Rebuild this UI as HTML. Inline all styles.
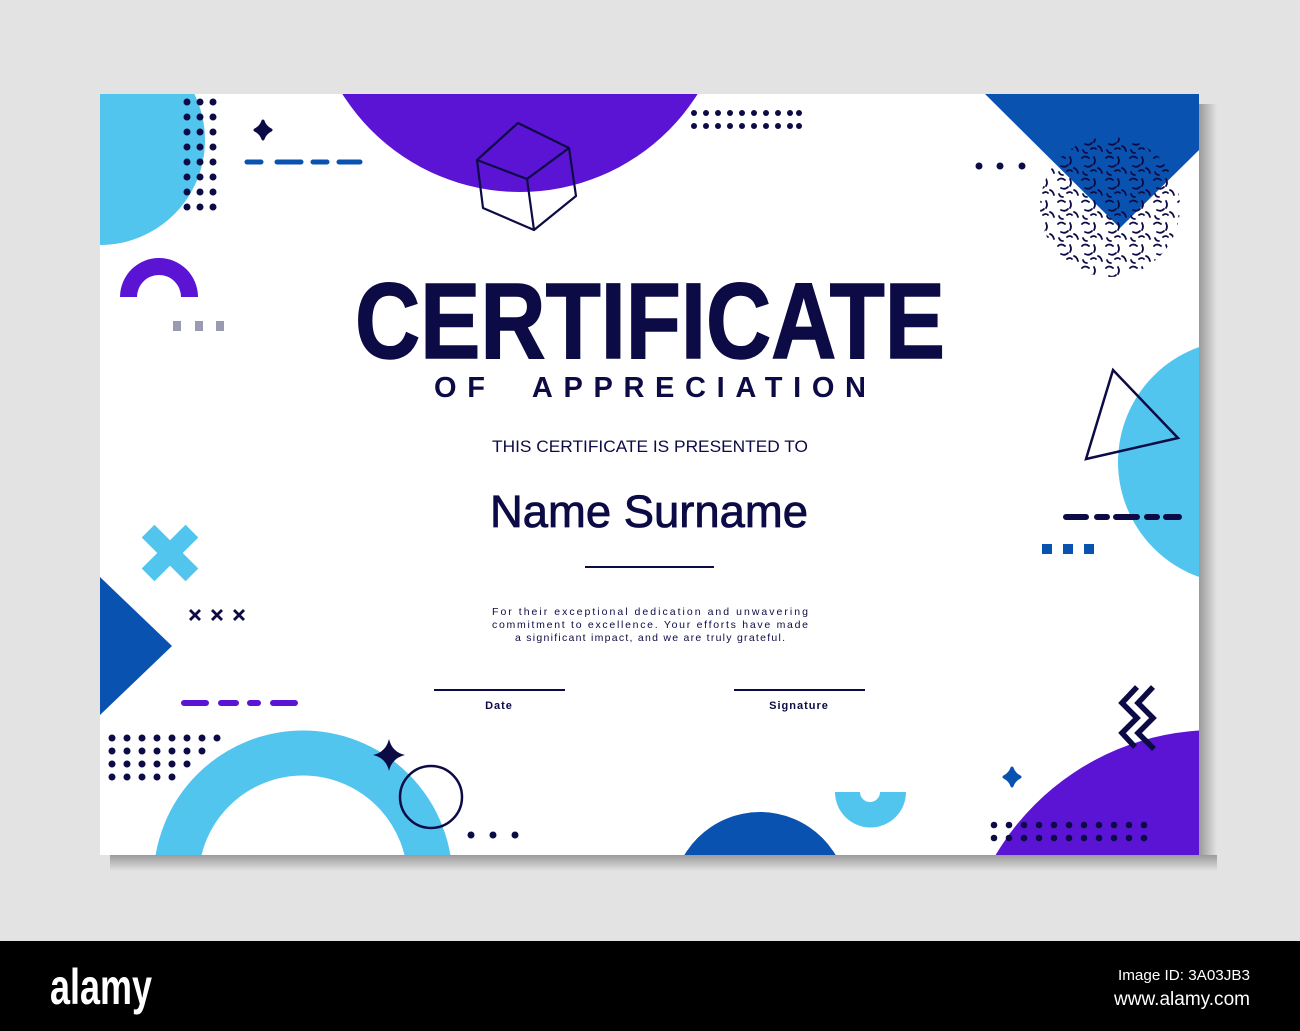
<!DOCTYPE html>
<html><head><meta charset="utf-8"><style>
html,body{margin:0;padding:0;background:#e3e3e3;width:1300px;height:1031px;overflow:hidden}
svg{display:block;position:absolute;left:0;top:0}
</style></head><body>
<svg width="1300" height="1031" viewBox="0 0 1300 1031" xmlns="http://www.w3.org/2000/svg" font-family="Liberation Sans, sans-serif">
<defs>
<clipPath id="card"><rect x="100" y="94" width="1099" height="761"/></clipPath>
<linearGradient id="shr" x1="0" x2="1"><stop offset="0" stop-color="#9a9a9a"/><stop offset="1" stop-color="#e3e3e3"/></linearGradient>
<linearGradient id="shb" x1="0" y1="0" x2="0" y2="1"><stop offset="0" stop-color="#9a9a9a"/><stop offset="1" stop-color="#e3e3e3"/></linearGradient>
<pattern id="squig" width="24" height="22" patternUnits="userSpaceOnUse">
<g fill="none" stroke="#0d0b45" stroke-width="1.8" stroke-linecap="round">
<path d="M2 4q3-3 7 0"/><path d="M14 3q2 4 0 7"/><path d="M5 12q4 2 7-1"/><path d="M18 14q3 1 4 5"/><path d="M3 18q1 3 4 3"/><path d="M11 17q3-2 5 0"/></g>
</pattern>
</defs>
<rect x="1199" y="104" width="18" height="760" fill="url(#shr)"/>
<rect x="110" y="855" width="1107" height="16" fill="url(#shb)"/>
<rect x="100" y="94" width="1099" height="761" fill="#fff"/>
<g clip-path="url(#card)">
<circle cx="100" cy="140" r="105" fill="#52c5ef"/>
<circle cx="520" cy="-18" r="210" fill="#5c14d4"/>
<polygon points="985,94 1199,94 1199,150 1120,228" fill="#0a52b0"/>
<circle cx="1240" cy="462" r="122" fill="#52c5ef"/>
<polygon points="100,577 172,646 100,715" fill="#0a52b0"/>
<circle cx="303" cy="880" r="127" fill="none" stroke="#52c5ef" stroke-width="45"/>
<circle cx="760" cy="900" r="88" fill="#0a52b0"/>
<circle cx="1215" cy="985" r="255" fill="#5c14d4"/>
</g>
<circle cx="1110" cy="207" r="70" fill="url(#squig)"/>
<g fill="#0d0b45">
<circle cx="187" cy="102" r="3.5"/><circle cx="200" cy="102" r="3.5"/><circle cx="213" cy="102" r="3.5"/>
<circle cx="187" cy="117" r="3.5"/><circle cx="200" cy="117" r="3.5"/><circle cx="213" cy="117" r="3.5"/>
<circle cx="187" cy="132" r="3.5"/><circle cx="200" cy="132" r="3.5"/><circle cx="213" cy="132" r="3.5"/>
<circle cx="187" cy="147" r="3.5"/><circle cx="200" cy="147" r="3.5"/><circle cx="213" cy="147" r="3.5"/>
<circle cx="187" cy="162" r="3.5"/><circle cx="200" cy="162" r="3.5"/><circle cx="213" cy="162" r="3.5"/>
<circle cx="187" cy="177" r="3.5"/><circle cx="200" cy="177" r="3.5"/><circle cx="213" cy="177" r="3.5"/>
<circle cx="187" cy="192" r="3.5"/><circle cx="200" cy="192" r="3.5"/><circle cx="213" cy="192" r="3.5"/>
<circle cx="187" cy="207" r="3.5"/><circle cx="200" cy="207" r="3.5"/><circle cx="213" cy="207" r="3.5"/>
</g>
<path d="M263 121q2 6 8 9q-6 3-8 9q-2-6-8-9q6-3 8-9z" fill="#0d0b45" stroke="#0d0b45" stroke-width="3" stroke-linejoin="round"/>
<g stroke="#0a52b0" stroke-width="5" stroke-linecap="round">
<path d="M247 162h14M277 162h24M313 162h14M339 162h21"/></g>
<g fill="none" stroke="#0d0b45" stroke-width="2.2" stroke-linejoin="round">
<path d="M518 123L569 148L527 179L477 160Z"/>
<path d="M477 160L483 208L534 230L576 196L569 148M527 179L534 230"/></g>
<path d="M120 297A39 39 0 0 1 198 297H181A22 22 0 0 0 137 297Z" fill="#5c14d4"/>
<g fill="#9a9ab0"><rect x="173" y="321" width="8" height="10"/><rect x="195" y="321" width="8" height="10"/><rect x="216" y="321" width="8" height="10"/></g>
<g fill="#0d0b45">
<circle cx="694" cy="113" r="3"/><circle cx="706" cy="113" r="3"/><circle cx="718" cy="113" r="3"/><circle cx="730" cy="113" r="3"/><circle cx="742" cy="113" r="3"/><circle cx="754" cy="113" r="3"/><circle cx="766" cy="113" r="3"/><circle cx="778" cy="113" r="3"/><circle cx="790" cy="113" r="3"/><circle cx="799" cy="113" r="3"/>
<circle cx="694" cy="126" r="3"/><circle cx="706" cy="126" r="3"/><circle cx="718" cy="126" r="3"/><circle cx="730" cy="126" r="3"/><circle cx="742" cy="126" r="3"/><circle cx="754" cy="126" r="3"/><circle cx="766" cy="126" r="3"/><circle cx="778" cy="126" r="3"/><circle cx="790" cy="126" r="3"/><circle cx="799" cy="126" r="3"/>
<circle cx="979" cy="166" r="3.5"/><circle cx="1000" cy="166" r="3.5"/><circle cx="1022" cy="166" r="3.5"/>
</g>
<polygon points="1113,370 1178,438 1086,459" fill="none" stroke="#0d0b45" stroke-width="2.5"/>
<g stroke="#0d0b45" stroke-width="6" stroke-linecap="round"><path d="M1066 517h20M1097 517h10M1116 517h21M1147 517h10M1166 517h13"/></g>
<g fill="#0a52b0"><rect x="1042" y="544" width="10" height="10"/><rect x="1063" y="544" width="10" height="10"/><rect x="1084" y="544" width="10" height="10"/></g>
<g transform="translate(170 553) rotate(45)" fill="#52c5ef"><rect x="-31" y="-9" width="62" height="18"/><rect x="-9" y="-31" width="18" height="62"/></g>
<g stroke="#0d0b45" stroke-width="2.8"><path d="M190 610l10 10M200 610l-10 10M212 610l10 10M222 610l-10 10M234 610l10 10M244 610l-10 10"/></g>
<g stroke="#5c14d4" stroke-width="6" stroke-linecap="round"><path d="M184 703h22M221 703h15M250 703h8M273 703h22"/></g>
<g fill="#0d0b45">
<circle cx="112" cy="738" r="3.5"/><circle cx="127" cy="738" r="3.5"/><circle cx="142" cy="738" r="3.5"/><circle cx="157" cy="738" r="3.5"/><circle cx="172" cy="738" r="3.5"/><circle cx="187" cy="738" r="3.5"/><circle cx="202" cy="738" r="3.5"/><circle cx="217" cy="738" r="3.5"/>
<circle cx="112" cy="751" r="3.5"/><circle cx="127" cy="751" r="3.5"/><circle cx="142" cy="751" r="3.5"/><circle cx="157" cy="751" r="3.5"/><circle cx="172" cy="751" r="3.5"/><circle cx="187" cy="751" r="3.5"/><circle cx="202" cy="751" r="3.5"/>
<circle cx="112" cy="764" r="3.5"/><circle cx="127" cy="764" r="3.5"/><circle cx="142" cy="764" r="3.5"/><circle cx="157" cy="764" r="3.5"/><circle cx="172" cy="764" r="3.5"/><circle cx="187" cy="764" r="3.5"/>
<circle cx="112" cy="777" r="3.5"/><circle cx="127" cy="777" r="3.5"/><circle cx="142" cy="777" r="3.5"/><circle cx="157" cy="777" r="3.5"/><circle cx="172" cy="777" r="3.5"/>
<circle cx="471" cy="835" r="3.5"/><circle cx="493" cy="835" r="3.5"/><circle cx="515" cy="835" r="3.5"/>
</g>
<path d="M389 739Q392 752 405 755Q392 758 389 771Q386 758 373 755Q386 752 389 739Z" fill="#0d0b45"/>
<circle cx="431" cy="797" r="31" fill="none" stroke="#0d0b45" stroke-width="2.5"/>
<path d="M835 792H906A35.5 35.5 0 0 1 835 792Z" fill="#52c5ef"/>
<path d="M860 792A10 10 0 0 0 880 792Z" fill="#fff"/>
<path d="M1012 768q2 6 8 9q-6 3-8 9q-2-6-8-9q6-3 8-9z" fill="#0a52b0" stroke="#0a52b0" stroke-width="3" stroke-linejoin="round"/>
<g fill="none" stroke="#0d0b45" stroke-width="5.5"><path d="M1137 687L1122 703L1137 718L1122 733L1135 747"/><path d="M1153 687L1138 703L1153 718L1138 733L1154 749"/></g>
<g fill="#0d0b45">
<circle cx="994" cy="825" r="3.3"/><circle cx="1009" cy="825" r="3.3"/><circle cx="1024" cy="825" r="3.3"/><circle cx="1039" cy="825" r="3.3"/><circle cx="1054" cy="825" r="3.3"/><circle cx="1069" cy="825" r="3.3"/><circle cx="1084" cy="825" r="3.3"/><circle cx="1099" cy="825" r="3.3"/><circle cx="1114" cy="825" r="3.3"/><circle cx="1129" cy="825" r="3.3"/><circle cx="1144" cy="825" r="3.3"/>
<circle cx="994" cy="838" r="3.3"/><circle cx="1009" cy="838" r="3.3"/><circle cx="1024" cy="838" r="3.3"/><circle cx="1039" cy="838" r="3.3"/><circle cx="1054" cy="838" r="3.3"/><circle cx="1069" cy="838" r="3.3"/><circle cx="1084" cy="838" r="3.3"/><circle cx="1099" cy="838" r="3.3"/><circle cx="1114" cy="838" r="3.3"/><circle cx="1129" cy="838" r="3.3"/><circle cx="1144" cy="838" r="3.3"/>
</g>
<g fill="#0d0b45">
<text x="355" y="358" font-size="108" font-weight="bold" stroke="#0d0b45" stroke-width="1.5" textLength="590" lengthAdjust="spacingAndGlyphs">CERTIFICATE</text>
<text x="434" y="397" font-size="29" font-weight="bold" textLength="432" lengthAdjust="spacing" xml:space="preserve">OF  APPRECIATION</text>
<text x="492" y="452" font-size="16.5" textLength="316" lengthAdjust="spacingAndGlyphs">THIS CERTIFICATE IS PRESENTED TO</text>
<text x="490" y="527" font-size="45" stroke="#0d0b45" stroke-width="0.8" textLength="318" lengthAdjust="spacingAndGlyphs">Name Surname</text>
<rect x="585" y="566" width="129" height="2"/>
<text x="492" y="615" font-size="10.5" textLength="316" lengthAdjust="spacing">For their exceptional dedication and unwavering</text>
<text x="492" y="628" font-size="10.5" textLength="316" lengthAdjust="spacing">commitment to excellence. Your efforts have made</text>
<text x="515" y="641" font-size="10.5" textLength="270" lengthAdjust="spacing">a significant impact, and we are truly grateful.</text>
<rect x="434" y="689" width="131" height="2"/>
<rect x="734" y="689" width="131" height="2"/>
<text x="499" y="709" font-size="11" font-weight="bold" text-anchor="middle" letter-spacing="1">Date</text>
<text x="799" y="709" font-size="11" font-weight="bold" text-anchor="middle" letter-spacing="1">Signature</text>
</g>
<rect x="0" y="941" width="1300" height="90" fill="#000"/>
<text x="50" y="1004" font-size="50" font-weight="bold" fill="#fff" textLength="102" lengthAdjust="spacingAndGlyphs">alamy</text>
<text x="1250" y="980" font-size="15" fill="#fff" text-anchor="end" textLength="132" lengthAdjust="spacingAndGlyphs">Image ID: 3A03JB3</text>
<text x="1250" y="1005" font-size="19" fill="#fff" text-anchor="end" textLength="136" lengthAdjust="spacingAndGlyphs">www.alamy.com</text>
</svg>
</body></html>
